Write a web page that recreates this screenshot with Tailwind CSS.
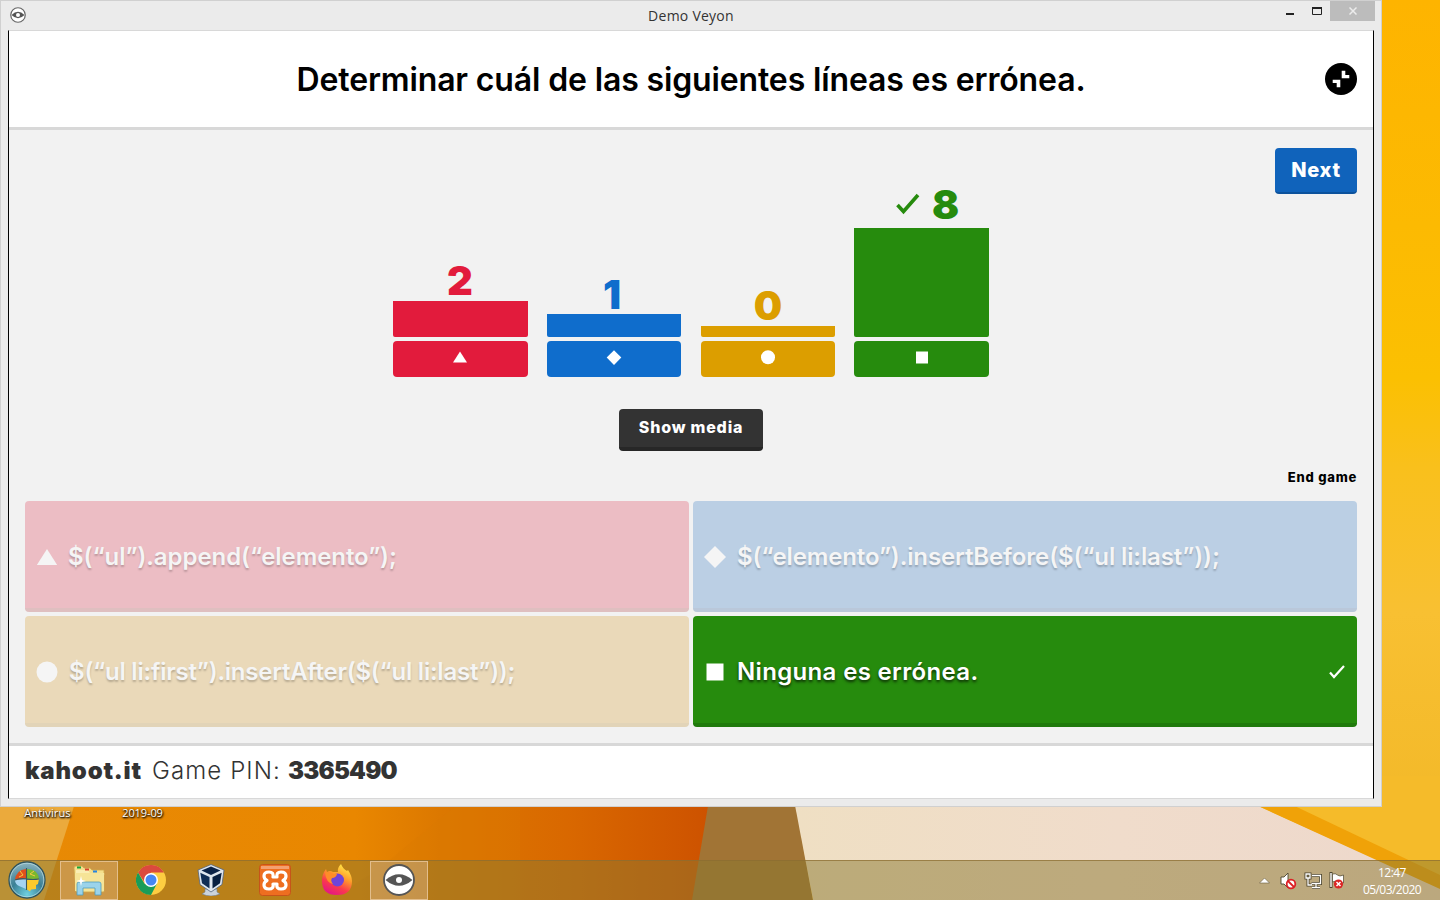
<!DOCTYPE html>
<html lang="es">
<head>
<meta charset="utf-8">
<title>Demo Veyon</title>
<script src="https://cdn.jsdelivr.net/npm/@tailwindcss/browser@4"></script>
</head>
<body class="relative flex h-[900px] w-[1440px] flex-col justify-between overflow-hidden bg-[#fcb800] font-['Inter','Liberation_Sans',sans-serif]">
<!-- wallpaper -->
<svg class="absolute inset-0" width="1440" height="900" viewBox="0 0 1440 900">
  <defs>
    <linearGradient id="or" x1="0" x2="1"><stop offset="0" stop-color="#e88a05"/><stop offset=".5" stop-color="#e98700"/><stop offset=".62" stop-color="#dc7800"/><stop offset=".8" stop-color="#d96800"/><stop offset="1" stop-color="#cd5200"/></linearGradient>
    <linearGradient id="cr" x1="0" x2="1"><stop offset="0" stop-color="#efdfc3"/><stop offset=".5" stop-color="#f0dccb"/><stop offset="1" stop-color="#edd8cc"/></linearGradient>
    <linearGradient id="ye" x1="0" y1="0" x2="0" y2="1"><stop offset="0" stop-color="#feb400"/><stop offset=".25" stop-color="#fcba02"/><stop offset=".42" stop-color="#fbc002"/><stop offset=".52" stop-color="#f9c01c"/><stop offset=".68" stop-color="#f8c032"/><stop offset=".9" stop-color="#f3b929"/><stop offset="1" stop-color="#f4b92b"/></linearGradient>
  </defs>
  <path d="M1370 0h70v900h-70z" fill="url(#ye)"/>
  <path d="M0 800h710l-16 100H0z" fill="url(#or)"/>
  <path d="M0 800h76L44 900H0z" fill="#ebaa3c"/>
  <path d="M458 804L380 868 330 900H520V800z" fill="#d97900" opacity=".3"/>
  <path d="M709 800h86l18 100H692z" fill="#a17435"/>
  <path d="M794 800h470l180 90v10H813z" fill="url(#cr)"/>
  <path d="M1245 800l195 88v8h10v-120h-190z" fill="#f5bb2a"/>
  <path d="M1245 800l195 89v-14L1282 800z" fill="#f0a208"/>
</svg>

<!-- desktop icon captions -->
<div class="absolute top-[805px] left-px flex w-[190px] font-['Open_Sans','Noto_Sans',sans-serif] text-[11px] leading-4 tracking-[0.15px] text-white [text-shadow:1px_1px_2px_#000,0_1px_2px_#000]">
  <span class="w-[94px] text-center">Antivirus</span><span class="w-[98px] text-center tracking-[-0.1px]">2019-09</span>
</div>

<!-- window -->
<section class="relative flex h-[807px] w-[1382px] flex-col border border-[#d0d0d0] bg-[#ebebeb] px-[7px] pb-[7px]">
  <header class="relative flex h-[29px] shrink-0 items-center justify-center font-['Open_Sans','Noto_Sans',sans-serif] text-[#333]">
    <svg class="absolute top-[6px] left-[2px]" width="16" height="16" viewBox="0 0 32 32"><circle cx="16" cy="16" r="14.500" fill="#fff" stroke="#666" stroke-width="2.400"/><path d="M3 16Q16 3 29 16 16 29 3 16z" fill="#555"/><circle cx="16" cy="16" r="4" fill="#fff"/></svg>
    <span class="text-[14px] tracking-[0.25px]">Demo Veyon</span>
    <div class="absolute top-0 -right-px flex h-5 items-start">
      <svg width="50" height="20" viewBox="0 0 50 20"><path d="M6 12h8v2H6z" fill="#222"/><path d="M32.500 7.500h9v6h-9z" fill="none" stroke="#222"/><path d="M32 6h10v2H32z" fill="#222"/></svg>
      <div class="flex h-5 w-[45px] items-center justify-center bg-[#bcbcbc]"><svg width="8" height="8" viewBox="0 0 8 8"><path d="M.5.5l7 7m0-7l-7 7" stroke="#ececec" stroke-width="1.500"/></svg></div>
    </div>
  </header>
  <main class="flex min-h-0 grow flex-col border-x border-t border-x-black border-t-[#d8d8d8] border-b border-b-[#d8d8d8] bg-[#f2f2f2]">
    <div class="relative flex h-[99px] shrink-0 items-center justify-center border-b-3 border-[#d8d8d8] bg-white pt-0.5">
      <h1 class="text-[32px] font-semibold tracking-[-0.14px] whitespace-nowrap text-black">Determinar cuál de las siguientes líneas es errónea.</h1>
      <svg class="absolute top-8 right-4" width="32" height="32" viewBox="0 0 32 32"><circle cx="16" cy="16" r="16"/><path d="M16.700 7.700h3.600V12h4v3.300h-7.600zM7.700 16.700h7.600v7.600h-3.600V20h-4z" fill="#fff"/></svg>
    </div>

    <div class="relative flex h-[371px] shrink-0 flex-col items-center">
      <button class="absolute top-[18px] right-4 flex h-[46px] w-[82px] items-center justify-center rounded-[4px] border-b-2 border-[#0c529c] bg-[#1063bb] text-white"><span class="text-[20px] font-extrabold tracking-[0.7px]">Next</span></button>
      <div class="mt-[50px] flex h-[197px] items-end gap-[19px]">
        <div class="flex w-[135px] flex-col items-center text-[#e21b3c]">
          <b class="flex h-[40px] items-center pr-px text-[40px] font-black">2</b>
          <i class="h-[36px] w-full rounded-b-[2px] bg-[#e21b3c]"></i>
          <i class="mt-1 flex h-9 w-full items-center justify-center rounded-[4px] bg-[#e21b3c]"><svg width="15" height="16" viewBox="0 0 15 16"><path d="M7 .5l7 11H0z" fill="#fff"/></svg></i>
        </div>
        <div class="flex w-[134px] flex-col items-center text-[#0f6dcc]">
          <b class="flex h-[39px] items-center pr-1 text-[40px] font-black">1</b>
          <i class="h-[23px] w-full rounded-b-[2px] bg-[#0f6dcc]"></i>
          <i class="mt-1 flex h-9 w-full items-center justify-center rounded-[4px] bg-[#0f6dcc]"><svg width="16" height="18" viewBox="0 0 16 18"><path d="M8 .3L15.300 7.600 8 15 .7 7.600z" fill="#fff"/></svg></i>
        </div>
        <div class="ml-px flex w-[134px] flex-col items-center text-[#dc9e00]">
          <b class="flex h-[40px] items-center text-[40px] font-black">0</b>
          <i class="h-[11px] w-full rounded-b-[2px] bg-[#dc9e00]"></i>
          <i class="mt-1 flex h-9 w-full items-center justify-center rounded-[4px] bg-[#dc9e00]"><svg width="14" height="18" viewBox="0 0 14 18"><circle cx="7" cy="7.200" r="7" fill="#fff"/></svg></i>
        </div>
        <div class="flex w-[135px] flex-col items-center text-[#268b0d]">
          <div class="flex h-[48px] items-center gap-3 pl-3"><svg width="24" height="22" viewBox="0 0 24 22"><path d="M1.500 12l6 6.500L22 2" fill="none" stroke="#268b0d" stroke-width="3.600"/></svg><b class="pt-0.5 text-[40px] font-black">8</b></div>
          <i class="h-[109px] w-full shrink-0 rounded-b-[2px] bg-[#268b0d]"></i>
          <i class="mt-1 flex h-9 w-full shrink-0 items-center justify-center rounded-[4px] bg-[#268b0d]"><svg width="12" height="16" viewBox="0 0 12 16"><path d="M0 .5h12v12H0z" fill="#fff"/></svg></i>
        </div>
      </div>
      <button class="mt-8 flex h-[42px] w-[144px] items-center justify-center rounded-[4px] border-b-4 border-[#272727] bg-[#333] pb-0.5 text-white"><span class="text-[16px] font-extrabold tracking-[0.8px]">Show media</span></button>
      <span class="mt-[16px] mr-4 self-end text-[13px] leading-5 font-extrabold tracking-[0.75px]">End game</span>
    </div>

    <div class="mx-4 grid shrink-0 grid-cols-2 gap-1 text-white [text-shadow:0_2px_2px_rgba(0,0,0,.22)]">
      <div class="flex h-[111px] items-center rounded-[4px] border-b-4 border-[#dfbfc0] bg-[#ecbdc4] pt-1 pl-3 text-[#f5f5f5]"><svg width="20" height="16" viewBox="0 0 20 16"><path d="M10 0l10.200 16H-.2z" fill="#f5f5f5"/></svg><span class="ml-[11px] text-[24px] font-semibold tracking-[-0.06px] whitespace-nowrap">$(“ul”).append(“elemento”);</span></div>
      <div class="flex h-[111px] items-center rounded-[4px] border-b-4 border-[#bac8da] bg-[#bbcfe4] pt-1 pl-[11px] text-[#f5f5f5]"><svg width="22" height="22" viewBox="0 0 22 22"><path d="M11 0l11 11-11 11L0 11z" fill="#f5f5f5"/></svg><span class="ml-[11px] text-[24px] font-semibold tracking-[-0.12px] whitespace-nowrap">$(“elemento”).insertBefore($(“ul li:last”));</span></div>
      <div class="flex h-[111px] items-center rounded-[4px] border-b-4 border-[#e2d4b8] bg-[#ead9b9] pt-1 pl-[11px] text-[#f5f5f5]"><svg width="22" height="22" viewBox="0 0 22 22"><circle cx="11" cy="11" r="10.500" fill="#f5f5f5"/></svg><span class="ml-[11px] text-[24px] font-semibold tracking-[-0.23px] whitespace-nowrap">$(“ul li:first”).insertAfter($(“ul li:last”));</span></div>
      <div class="flex h-[111px] items-center rounded-[4px] border-b-4 border-[#207a0c] bg-[#268b0d] pt-1 pr-3 pl-[13px] [text-shadow:0_2px_3px_rgba(0,0,0,.7)]"><svg width="18" height="18" viewBox="0 0 18 18"><path d="M.5.500h17v17H.5z" fill="#fff"/></svg><span class="ml-[13px] text-[24px] font-semibold tracking-[0.34px] whitespace-nowrap">Ninguna es errónea.</span><svg class="ml-auto" width="16" height="14" viewBox="0 0 16 14"><path d="M1 7.500l4 4.500L15 1" fill="none" stroke="#fff" stroke-width="2.200"/></svg></div>
    </div>

    <footer class="mt-4 flex min-h-0 grow items-center border-t-3 border-[#d8d8d8] bg-white pb-0.5 pl-4 text-[24px] whitespace-nowrap text-[#333]">
      <b class="w-[117px] font-black tracking-[0.8px]">kahoot.it</b><span class="ml-[10px] w-[128px] font-light tracking-[1.1px]">Game PIN:</span><b class="ml-2 font-black tracking-[-0.8px]">3365490</b>
    </footer>
  </main>
</section>

<!-- taskbar -->
<nav class="relative flex h-10 items-center border-t border-[#8b6c30]/70 bg-[#8a7830]/50 pb-px text-white">
  <svg class="ml-2" width="38" height="38" viewBox="0 0 38 38"><defs><radialGradient id="orb" cx=".5" cy=".9" r=".9"><stop offset="0" stop-color="#6fd0e0"/><stop offset=".5" stop-color="#3a7f95"/><stop offset="1" stop-color="#8fb6c0"/></radialGradient></defs><circle cx="19" cy="19" r="18" fill="url(#orb)" stroke="#31545c" stroke-width="1.300"/><circle cx="19" cy="19" r="16.800" fill="none" stroke="#bfe0e4" stroke-width=".7"/><path d="M18 8Q8 9 7 19l11-1z" fill="#e0501c"/><path d="M19 8q11 0 12 10l-12 0z" fill="#7ab82e"/><path d="M7 19l11-1v10l-7-3q-4-2-4-6z" fill="#a5d4f2"/><path d="M19 19l12-1-1 5-2 1v4l-5 .500-1 2-3-2z" fill="#fbc92d"/><path d="M18.500 7v22M7 19q6-2 12-1t12 0" stroke="#3b5960" stroke-width="1.100" fill="none"/><path d="M12 10l3 4-4 2M26 10l-4 3 5 2" stroke="#f6c840" stroke-width="1" fill="none"/></svg>
  <div class="ml-[14px] flex h-[39px] w-[58px] items-center justify-center border border-[#e8c89c]/80 bg-[#e0ae74]/50">
    <svg width="34" height="32" viewBox="0 0 34 32"><path d="M2 4q0-2 2-2h6l2 2h6l2 2h12v22H4z" fill="#f5df8c" stroke="#cfa74d" stroke-width=".8"/><path d="M4 6h12l2 3h14v17H4z" fill="#faeeb4"/><path d="M3 9h28q2 0 1 2v16H3z" fill="#f6e497"/><path d="M5 2.500h4v2H5z" fill="#18a53a"/><path d="M13 4.500h4v2h-4z" fill="#d8452f"/><path d="M21 6.500h4v2h-4z" fill="#2685e0"/><path d="M5 31V20q0-2 2-2h20q2 0 2 2v11h-6v-7H11v7z" fill="#9bd3ea" stroke="#4f9cbd" stroke-width=".8"/><path d="M9 12l1 4 4 1-4 1-1 4-1-4-4-1 4-1z" fill="#fff"/></svg>
  </div>
  <svg class="ml-[18px]" width="30" height="30" viewBox="0 0 30 30"><circle cx="15" cy="15" r="15" fill="#fdcd41"/><path d="M2 7.500A15 15 0 0 1 28 7.500H15L9 18z" fill="#db4a3e"/><path d="M2 7.500A15 15 0 0 0 15 30l6-11.500-12.500.2z" fill="#199c58"/><circle cx="15" cy="15" r="7" fill="#fff"/><circle cx="15" cy="15" r="5.500" fill="#4587f3"/></svg>
  <svg class="ml-[31px]" width="28" height="32" viewBox="0 0 28 32"><path d="M8 25h12v3l3 2q-9 4-18 0l3-2z" fill="#cbd3dc" stroke="#6e7c8c" stroke-width=".6"/><path d="M14 .5L27 6 25 20.500 14 28 3 20.500 1 6z" fill="#dfe6ee" stroke="#53637b" stroke-width=".8"/><path d="M14 2.500L23.500 6.500 14 11 4.500 6.500z" fill="#0b2348"/><path d="M3.300 8.700L12.500 13v11.500L5 19.300z" fill="#102d55"/><path d="M24.700 8.700L15.500 13v11.500L23 19.300z" fill="#081f40"/></svg>
  <svg class="ml-[34px]" width="32" height="32" viewBox="0 0 32 32"><rect x=".5" y=".5" width="31" height="31" rx="3" fill="#ee6e20" stroke="#c6541a"/><path d="M2 2h28v3H2z" fill="#f3a171"/><path d="M14 13h4q-1-5 4-5t5 4q0 3-3 4.500 3 1.500 3 4.500 0 4-5 4t-4-5h-4q1 5-4 5t-5-4q0-3 3-4.500-3-1.500-3-4.500 0-4 5-4t4 5z" fill="none" stroke="#fff" stroke-width="3.200" stroke-linejoin="round"/></svg>
  <svg class="ml-[30px]" width="32" height="32" viewBox="0 0 32 32"><defs><linearGradient id="fx" x1=".8" y1="0" x2=".3" y2="1"><stop offset="0" stop-color="#fff24b"/><stop offset=".4" stop-color="#ff9a2a"/><stop offset=".7" stop-color="#fb3a4c"/><stop offset="1" stop-color="#e31587"/></linearGradient></defs><path d="M17 8q-1-4 3-8 2 5 6 7l1-1q4 6 4 11 0 14-15 14Q1 31 1 17 1 10 5 5l1 3q3-2 6 0z" fill="url(#fx)"/><circle cx="16.500" cy="16" r="6.500" fill="#7044d8"/><path d="M4 8q6 0 8 2h4q-1 4-5 4-2 3 1 6-7-1-8-12z" fill="#ff8d28"/></svg>
  <div class="ml-[17px] flex h-[39px] w-[58px] items-center justify-center border border-[#e8c89c]/80 bg-[#d8ae7c]/50">
    <svg width="32" height="32" viewBox="0 0 32 32"><circle cx="16" cy="16" r="15" fill="#fff" stroke="#555" stroke-width="1.800"/><path d="M2.500 16Q16 4.500 29.500 16 16 27.500 2.500 16z" fill="#555"/><circle cx="16" cy="16" r="3" fill="#fff"/></svg>
  </div>
  <div class="ml-auto flex h-full items-center">
    <svg width="90" height="20" viewBox="0 0 90 20"><path d="M1.500 13L6.500 8l5 5z" fill="#fff" stroke="#665b3d" stroke-width=".6"/><path d="M23 7h3l4-4v15l-4-4h-3z" fill="#fff" stroke="#4c452e" stroke-width=".9"/><circle cx="33" cy="14" r="4.300" fill="#fff" stroke="#dc1f24" stroke-width="1.800"/><path d="M30 11l6 6" stroke="#dc1f24" stroke-width="1.800"/><g fill="none" stroke="#4c452e" stroke-width="3"><path d="M54 5.500h8.500v8H53.500M58 14v3M54 17.500h8M48 4h4v4h-4zM50 8v7h4"/></g><g fill="none" stroke="#fff" stroke-width="1.300"><path d="M54 5.500h8.500v8H53.500M58 14v3M54 17.500h8M48 4h4v4h-4zM50 8v7h4"/></g><path d="M73 2v16" stroke="#4c452e" stroke-width="3"/><path d="M73 3v14" stroke="#fff" stroke-width="1.400"/><path d="M74.500 4q3-1 5 1t6 0v8q-3 1-5-1t-6 0z" fill="#fff" stroke="#4c452e" stroke-width=".7"/><circle cx="80.500" cy="14" r="4.600" fill="#db2525"/><path d="M78.500 12l4 4m0-4l-4 4" stroke="#fff" stroke-width="1.500"/></svg>
    <div class="flex w-[92px] flex-col items-center pt-px pr-2 pl-1 font-['Open_Sans','Noto_Sans',sans-serif] text-[12px] leading-[17px] tracking-[-0.55px] whitespace-nowrap"><span>12:47</span><span>05/03/2020</span></div>
  </div>
</nav>
</body>
</html>
